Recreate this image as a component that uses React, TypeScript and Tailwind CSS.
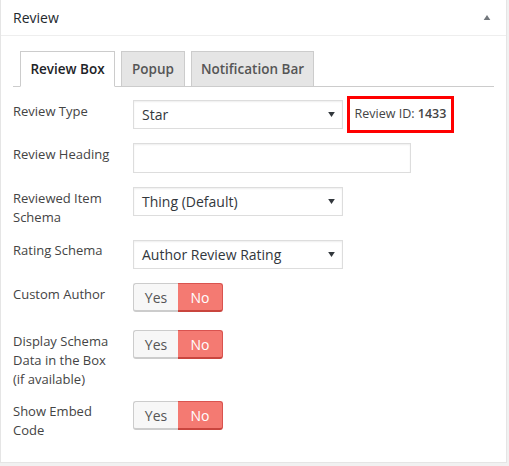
import { ReactNode } from "react";

const font = { fontFamily: '"Open Sans", "Noto Sans", sans-serif' };

function Caret({ up = false, className = "" }: { up?: boolean; className?: string }) {
  return (
    <svg width="8" height="6" viewBox="0 0 8 6" className={className}>
      {up ? <polygon points="0,6 8,6 4,0" fill="currentColor" /> : <polygon points="0,0 8,0 4,6" fill="currentColor" />}
    </svg>
  );
}

function Select({ value }: { value: string }) {
  return (
    <div className="w-[210px] h-[29px] flex items-center justify-between pl-[8px] pr-[7px] border border-[#dddddd] bg-white shadow-[inset_0_1px_2px_rgba(0,0,0,0.07)] text-[14px] text-[#32373c]">
      <span>{value}</span>
      <Caret className="text-[#32373c] w-[7px] h-[5px]" />
    </div>
  );
}

function Toggle() {
  return (
    <div className="flex h-[29px] text-[14px]">
      <div className="w-[45px] flex items-center justify-center bg-[#f7f7f7] border border-[#cccccc] border-r-0 border-b-2 rounded-l-[3px] text-[#555555]">
        Yes
      </div>
      <div className="w-[45px] flex items-center justify-center bg-[#f47a72] border border-[#d9534f] border-l-0 border-b-2 border-b-[#c9453e] rounded-r-[3px] text-white">
        No
      </div>
    </div>
  );
}

function Row({ label, mt, children, labelMt = "mt-[2px]" }: { label: ReactNode; mt: string; children: ReactNode; labelMt?: string }) {
  return (
    <div className={`flex items-start ${mt}`}>
      <div className={`w-[120px] pr-[14px] text-[13px] leading-[19px] text-[#444444] ${labelMt}`}>{label}</div>
      {children}
    </div>
  );
}

function Tab({ label, active = false, w }: { label: string; active?: boolean; w: string }) {
  return (
    <div
      className={`${w} h-[36px] -mb-px flex items-center justify-center border border-[#cccccc] text-[13.5px] font-semibold ${
        active ? "bg-white border-b-white text-[#1d2327]" : "bg-[#e5e5e5] border-b-[#cccccc] text-[#555555]"
      }`}
    >
      {label}
    </div>
  );
}

export default function App() {
  return (
    <div className="w-[509px] h-[466px] bg-[#f1f1f1]" style={font}>
      <div className="w-[507px] h-[463px] bg-white border border-[#e5e5e5] border-t-0">
        <div className="h-[36px] flex items-center justify-between pl-[12px] pr-[15px] border-b border-[#eeeeee]">
          <span className="text-[14px] text-[#23282d]">Review</span>
          <Caret up className="text-[#72777c] w-[8px] h-[5px]" />
        </div>

        <div className="px-[12px] pt-[15px]">
          <div className="flex gap-[6px] pl-[7px] border-b border-[#cccccc]">
            <Tab label="Review Box" active w="w-[95px]" />
            <Tab label="Popup" w="w-[64px]" />
            <Tab label="Notification Bar" w="w-[123px]" />
          </div>

          <Row label="Review Type" mt="mt-[13px]">
            <div className="flex items-center">
              <Select value="Star" />
              <div className="ml-[4px] -my-[4px] w-[107px] h-[37px] flex items-center justify-center border-[3px] border-[#ff0000] text-[12.5px] text-[#444444]">
                Review ID:&nbsp;<span className="font-semibold">1433</span>
              </div>
            </div>
          </Row>

          <Row label="Review Heading" mt="mt-[14px]">
            <div className="w-[278px] h-[30px] border border-[#dddddd] bg-white shadow-[inset_0_1px_2px_rgba(0,0,0,0.07)]" />
          </Row>

          <Row label={<>Reviewed Item<br />Schema</>} mt="mt-[14px]">
            <Select value="Thing (Default)" />
          </Row>

          <Row label="Rating Schema" mt="mt-[13px]" labelMt="mt-[1px]">
            <Select value="Author Review Rating" />
          </Row>

          <Row label="Custom Author" mt="mt-[14px]">
            <Toggle />
          </Row>

          <Row label={<>Display Schema<br />Data in the Box<br />(if available)</>} mt="mt-[18px]">
            <Toggle />
          </Row>

          <Row label={<>Show Embed<br />Code</>} mt="mt-[12px]" labelMt="mt-[1px]">
            <Toggle />
          </Row>
        </div>
      </div>
    </div>
  );
}
